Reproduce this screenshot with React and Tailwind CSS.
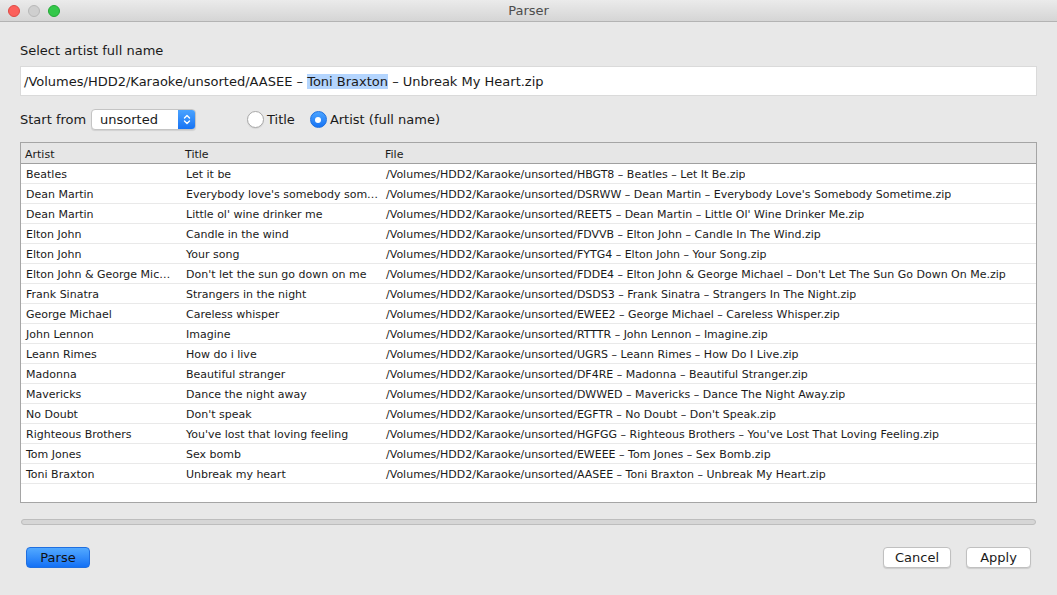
import React from 'react';

const BASE = '/Volumes/HDD2/Karaoke/unsorted/';

const rows = [
  ['Beatles', 'Let it be', 'HBGT8 – Beatles – Let It Be.zip'],
  ['Dean Martin', "Everybody love's somebody sometime", "DSRWW – Dean Martin – Everybody Love's Somebody Sometime.zip"],
  ['Dean Martin', "Little ol' wine drinker me", "REET5 – Dean Martin – Little Ol' Wine Drinker Me.zip"],
  ['Elton John', 'Candle in the wind', 'FDVVB – Elton John – Candle In The Wind.zip'],
  ['Elton John', 'Your song', 'FYTG4 – Elton John – Your Song.zip'],
  ['Elton John & George Michael', "Don't let the sun go down on me", "FDDE4 – Elton John & George Michael – Don't Let The Sun Go Down On Me.zip"],
  ['Frank Sinatra', 'Strangers in the night', 'DSDS3 – Frank Sinatra – Strangers In The Night.zip'],
  ['George Michael', 'Careless whisper', 'EWEE2 – George Michael – Careless Whisper.zip'],
  ['John Lennon', 'Imagine', 'RTTTR – John Lennon – Imagine.zip'],
  ['Leann Rimes', 'How do i live', 'UGRS – Leann Rimes – How Do I Live.zip'],
  ['Madonna', 'Beautiful stranger', 'DF4RE – Madonna – Beautiful Stranger.zip'],
  ['Mavericks', 'Dance the night away', 'DWWED – Mavericks – Dance The Night Away.zip'],
  ['No Doubt', "Don't speak", "EGFTR – No Doubt – Don't Speak.zip"],
  ['Righteous Brothers', "You've lost that loving feeling", "HGFGG – Righteous Brothers – You've Lost That Loving Feeling.zip"],
  ['Tom Jones', 'Sex bomb', 'EWEEE – Tom Jones – Sex Bomb.zip'],
  ['Toni Braxton', 'Unbreak my heart', 'AASEE – Toni Braxton – Unbreak My Heart.zip'],
];

const font = { fontFamily: '"DejaVu Sans", "Open Sans", sans-serif' };

const Radio = ({ checked, label }) => (
  <label className="flex items-center gap-[3px] text-[13px] text-[#1a1a1a]">
    {checked ? (
      <span className="w-[17px] h-[17px] rounded-full bg-gradient-to-b from-[#4aa3ff] to-[#1673f4] border border-[#1b6fe0] flex items-center justify-center">
        <span className="w-[6px] h-[6px] rounded-full bg-white" />
      </span>
    ) : (
      <span className="w-[17px] h-[17px] rounded-full bg-white border border-[#a8a8a8] shadow-[0_1px_1px_rgba(0,0,0,0.08)]" />
    )}
    <span>{label}</span>
  </label>
);

const App = () => {
  return (
    <div className="w-[1057px] h-[595px] bg-[#e8e8e8] flex flex-col overflow-hidden text-[#1a1a1a]" style={font}>
      {/* title bar */}
      <div className="h-[22px] shrink-0 bg-gradient-to-b from-[#ebebeb] to-[#d5d5d5] border-b border-[#b3b3b3] flex items-center relative">
        <div className="flex items-center gap-[8px] pl-[8px]">
          <span className="w-[12px] h-[12px] rounded-full bg-[#fc605b] border border-[#de4a44]" />
          <span className="w-[12px] h-[12px] rounded-full bg-[#cfcfcf] border border-[#b8b8b8]" />
          <span className="w-[12px] h-[12px] rounded-full bg-[#34c84a] border border-[#22a835]" />
        </div>
        <div className="absolute inset-0 flex items-center justify-center pt-[1px] text-[13px] text-[#4d4d4d]">Parser</div>
      </div>

      <div className="flex flex-col px-5">
        <div className="mt-[21px] h-[16px] text-[13px] leading-[16px]">Select artist full name</div>

        <div className="mt-[7px] h-[30px] bg-white border border-[#dadada] px-[3px] text-[13px] leading-[29px] whitespace-nowrap">
          {BASE}AASEE – <span className="bg-[#b4d5fe]">Toni Braxton</span> – Unbreak My Heart.zip
        </div>

        <div className="mt-[13px] h-[21px] flex items-center">
          <span className="w-[71px] text-[13px] whitespace-nowrap">Start from</span>
          <div className="w-[105px] h-[21px] flex rounded-[4px] border border-[#c4c4c4] bg-white overflow-hidden shadow-[0_1px_1px_rgba(0,0,0,0.1)]">
            <span className="flex-1 flex items-center pl-[8px] text-[13px]">unsorted</span>
            <span className="w-[17px] bg-gradient-to-b from-[#4aa3ff] to-[#1673f4] flex items-center justify-center">
              <svg width="8" height="13" viewBox="0 0 8 13" fill="none" stroke="white" strokeWidth="1.4" strokeLinecap="round" strokeLinejoin="round">
                <path d="M1.5 5 L4 2.5 L6.5 5" />
                <path d="M1.5 8 L4 10.5 L6.5 8" />
              </svg>
            </span>
          </div>
          <div className="ml-[51px] flex items-center gap-[15px]">
            <Radio label="Title" />
            <Radio checked label="Artist (full name)" />
          </div>
        </div>

        {/* table */}
        <div className="mt-[12px] h-[361px] bg-white border border-[#a5a5a5] flex flex-col text-[11px]">
          <div className="h-[21px] shrink-0 bg-[#e6e6e6] border-b border-[#a0a0a0] flex items-center pt-[4px]">
            <span className="w-[160px] pl-[4px]">Artist</span>
            <span className="w-[200px] pl-[4px]">Title</span>
            <span className="pl-[4px]">File</span>
          </div>
          {rows.map(([artist, title, file], i) => (
            <div key={i} className="h-[20px] shrink-0 border-b border-[#e9e9e9] flex items-center pt-[3px] whitespace-nowrap">
              <span className="w-[160px] pl-[5px] pr-[4px] truncate">{artist}</span>
              <span className="w-[200px] pl-[5px] pr-[2px] truncate">{title}</span>
              <span className="pl-[5px] truncate">{BASE}{file}</span>
            </div>
          ))}
        </div>

        {/* progress */}
        <div className="mt-[16px] mx-[1px] h-[6px] rounded-full bg-[#d6d6d6] border border-[#bdbdbd]" />

        {/* buttons */}
        <div className="mt-[22px] h-[21px] flex items-center justify-between pl-[6px] pr-[6px]">
          <button className="w-[64px] h-[21px] rounded-[4px] bg-gradient-to-b from-[#52a9ff] to-[#1270f5] border border-[#1f6fe0] text-[13px] text-[#111] flex items-center justify-center">
            Parse
          </button>
          <div className="flex gap-[15px]">
            <button className="w-[68px] h-[21px] rounded-[4px] bg-white border border-[#c0c0c0] shadow-[0_1px_1px_rgba(0,0,0,0.12)] text-[13px] flex items-center justify-center">
              Cancel
            </button>
            <button className="w-[65px] h-[21px] rounded-[4px] bg-white border border-[#c0c0c0] shadow-[0_1px_1px_rgba(0,0,0,0.12)] text-[13px] flex items-center justify-center">
              Apply
            </button>
          </div>
        </div>
      </div>
    </div>
  );
};

export default App;
